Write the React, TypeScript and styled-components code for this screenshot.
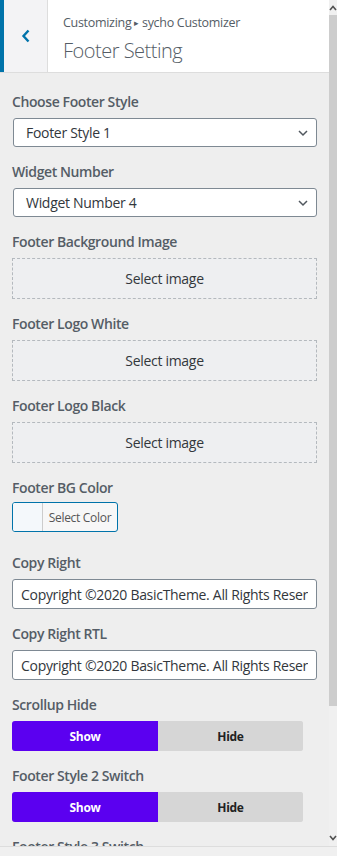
import React from "react";
import styled, { createGlobalStyle } from "styled-components";

const GlobalStyle = createGlobalStyle`
  html, body {
    margin: 0;
    padding: 0;
    background: #eee;
    font-family: "Open Sans", "Noto Sans", Arial, sans-serif;
  }
  * {
    box-sizing: border-box;
  }
`;

const Screen = styled.div`
  display: flex;
  flex-direction: column;
  width: 337px;
  height: 856px;
  overflow: hidden;
`;

const Body = styled.div`
  display: flex;
  height: 846px;
`;

const Panel = styled.div`
  flex: 1;
  overflow: hidden;
  background: #eee;
`;

const Header = styled.header`
  display: flex;
  height: 73px;
  background: #fff;
  border-bottom: 1px solid #ddd;
`;

const BackButton = styled.button`
  display: flex;
  align-items: center;
  justify-content: center;
  width: 48px;
  height: 100%;
  padding: 0;
  background: #f3f3f5;
  border: none;
  border-left: 4px solid #0073aa;
  border-right: 1px solid #ddd;
  color: #0073aa;
`;

const Titles = styled.div`
  display: flex;
  flex-direction: column;
  padding: 13px 0 0 15px;
  color: #555d66;
`;

const Crumb = styled.span`
  font-size: 12.5px;
  line-height: 20px;
  letter-spacing: -0.3px;
`;

const Arrow = styled.span`
  font-size: 9px;
  vertical-align: 1px;
`;

const Title = styled.h3`
  margin: 5px 0 0;
  font-size: 20px;
  font-weight: 300;
  line-height: 26px;
  letter-spacing: -0.5px;
`;

const Content = styled.div`
  padding: 19px 12px 0 12px;
`;

const Field = styled.div<{ $after?: number }>`
  margin-bottom: ${(p) => p.$after ?? 15}px;
`;

const Label = styled.label<{ $gap?: number }>`
  display: block;
  margin-bottom: ${(p) => p.$gap ?? 6}px;
  font-size: 14px;
  font-weight: 600;
  line-height: 20px;
  color: #555d66;
  letter-spacing: -0.4px;
  white-space: nowrap;
`;

const Select = styled.div`
  display: flex;
  align-items: center;
  justify-content: space-between;
  height: 29px;
  margin-left: 1px;
  padding: 0 8px 0 12px;
  background: #fff;
  border: 1px solid #7e8993;
  border-radius: 3px;
  font-size: 14px;
  color: #32373c;
  letter-spacing: -0.3px;
`;

const ImageSlot = styled.button`
  display: flex;
  align-items: center;
  justify-content: center;
  width: 100%;
  height: 41px;
  padding: 0;
  background: #eeeff1;
  border: 1px dashed #b4b9be;
  font-family: inherit;
  font-size: 14px;
  color: #32373c;
  letter-spacing: -0.3px;
`;

const ColorButton = styled.div`
  display: flex;
  width: 106px;
  height: 30px;
  border: 1px solid #0073aa;
  border-radius: 3px;
  overflow: hidden;
  background: #f7f7f7;
`;

const Swatch = styled.span<{ $color: string }>`
  width: 30px;
  background: ${(p) => p.$color};
  border-right: 1px solid #ccc;
`;

const ColorText = styled.span`
  flex: 1;
  display: flex;
  align-items: center;
  justify-content: center;
  font-size: 12px;
  color: #555;
  letter-spacing: -0.3px;
`;

const TextInput = styled.input`
  display: block;
  width: 100%;
  height: 30px;
  margin: 0;
  padding: 0 8px;
  background: #fff;
  border: 1px solid #7e8993;
  border-radius: 3px;
  font-family: inherit;
  font-size: 14px;
  color: #32373c;
  letter-spacing: -0.3px;
  outline: none;
`;

const Toggle = styled.div`
  display: flex;
  width: 291px;
  height: 30px;
  border-radius: 3px;
  overflow: hidden;
  background: #d6d6d6;
`;

const ToggleOption = styled.span<{ $active?: boolean }>`
  display: flex;
  align-items: center;
  justify-content: center;
  flex: ${(p) => (p.$active ? "0 0 146px" : "1")};
  background: ${(p) => (p.$active ? "#5b00f0" : "#d6d6d6")};
  color: ${(p) => (p.$active ? "#fff" : "#222")};
  font-size: 12px;
  font-weight: 700;
  letter-spacing: -0.3px;
`;

const Scrollbar = styled.div`
  display: flex;
  flex-direction: column;
  width: 8px;
  background: #f0f0f0;
`;

const ScrollArrow = styled.div<{ $down?: boolean }>`
  display: flex;
  align-items: center;
  justify-content: center;
  height: 15px;
  color: #505050;
  transform: ${(p) => (p.$down ? "rotate(180deg)" : "none")};
`;

const ScrollThumb = styled.div`
  height: 691px;
  background: #cdcdcd;
`;

const ScrollTrack = styled.div`
  flex: 1;
`;

const BottomBar = styled.div`
  height: 10px;
  background: #f0f0f0;
  border-top: 1px solid #ddd;
`;

const Chevron = ({ dir }: { dir: "down" | "left" | "up" }) => {
  if (dir === "left") {
    return (
      <svg width="10" height="14" viewBox="0 0 10 14">
        <path d="M7.5 1.5 L2.5 7 L7.5 12.5" fill="none" stroke="currentColor" strokeWidth="2.4" />
      </svg>
    );
  }
  if (dir === "up") {
    return (
      <svg width="8" height="8" viewBox="0 0 8 8">
        <path d="M1 6 L4 2.5 L7 6" fill="none" stroke="currentColor" strokeWidth="1.6" />
      </svg>
    );
  }
  return (
    <svg width="10" height="8" viewBox="0 0 10 8">
      <path d="M1 2 L5 6 L9 2" fill="none" stroke="#50575e" strokeWidth="1.5" />
    </svg>
  );
};

const copyText = "Copyright ©2020 BasicTheme. All Rights Reserved.";

const App = () => {
  return (
    <>
      <GlobalStyle />
      <Screen>
        <Body>
          <Panel>
            <Header>
              <BackButton aria-label="Back">
                <Chevron dir="left" />
              </BackButton>
              <Titles>
                <Crumb>
                  Customizing <Arrow>▸</Arrow> sycho Customizer
                </Crumb>
                <Title>Footer Setting</Title>
              </Titles>
            </Header>
            <Content>
              <Field>
                <Label>Choose Footer Style</Label>
                <Select>
                  Footer Style 1
                  <Chevron dir="down" />
                </Select>
              </Field>
              <Field>
                <Label>Widget Number</Label>
                <Select>
                  Widget Number 4
                  <Chevron dir="down" />
                </Select>
              </Field>
              <Field>
                <Label>Footer Background Image</Label>
                <ImageSlot>Select image</ImageSlot>
              </Field>
              <Field>
                <Label>Footer Logo White</Label>
                <ImageSlot>Select image</ImageSlot>
              </Field>
              <Field>
                <Label>Footer Logo Black</Label>
                <ImageSlot>Select image</ImageSlot>
              </Field>
              <Field $after={21}>
                <Label $gap={4}>Footer BG Color</Label>
                <ColorButton>
                  <Swatch $color="#f4f8fb" />
                  <ColorText>Select Color</ColorText>
                </ColorButton>
              </Field>
              <Field>
                <Label>Copy Right</Label>
                <TextInput readOnly value={copyText} />
              </Field>
              <Field>
                <Label>Copy Right RTL</Label>
                <TextInput readOnly value={copyText} />
              </Field>
              <Field>
                <Label>Scrollup Hide</Label>
                <Toggle>
                  <ToggleOption $active>Show</ToggleOption>
                  <ToggleOption>Hide</ToggleOption>
                </Toggle>
              </Field>
              <Field>
                <Label>Footer Style 2 Switch</Label>
                <Toggle>
                  <ToggleOption $active>Show</ToggleOption>
                  <ToggleOption>Hide</ToggleOption>
                </Toggle>
              </Field>
              <Field>
                <Label>Footer Style 3 Switch</Label>
                <Toggle>
                  <ToggleOption $active>Show</ToggleOption>
                  <ToggleOption>Hide</ToggleOption>
                </Toggle>
              </Field>
            </Content>
          </Panel>
          <Scrollbar>
            <ScrollArrow>
              <Chevron dir="up" />
            </ScrollArrow>
            <ScrollThumb />
            <ScrollTrack />
            <ScrollArrow $down>
              <Chevron dir="up" />
            </ScrollArrow>
          </Scrollbar>
        </Body>
        <BottomBar />
      </Screen>
    </>
  );
};

export default App;
